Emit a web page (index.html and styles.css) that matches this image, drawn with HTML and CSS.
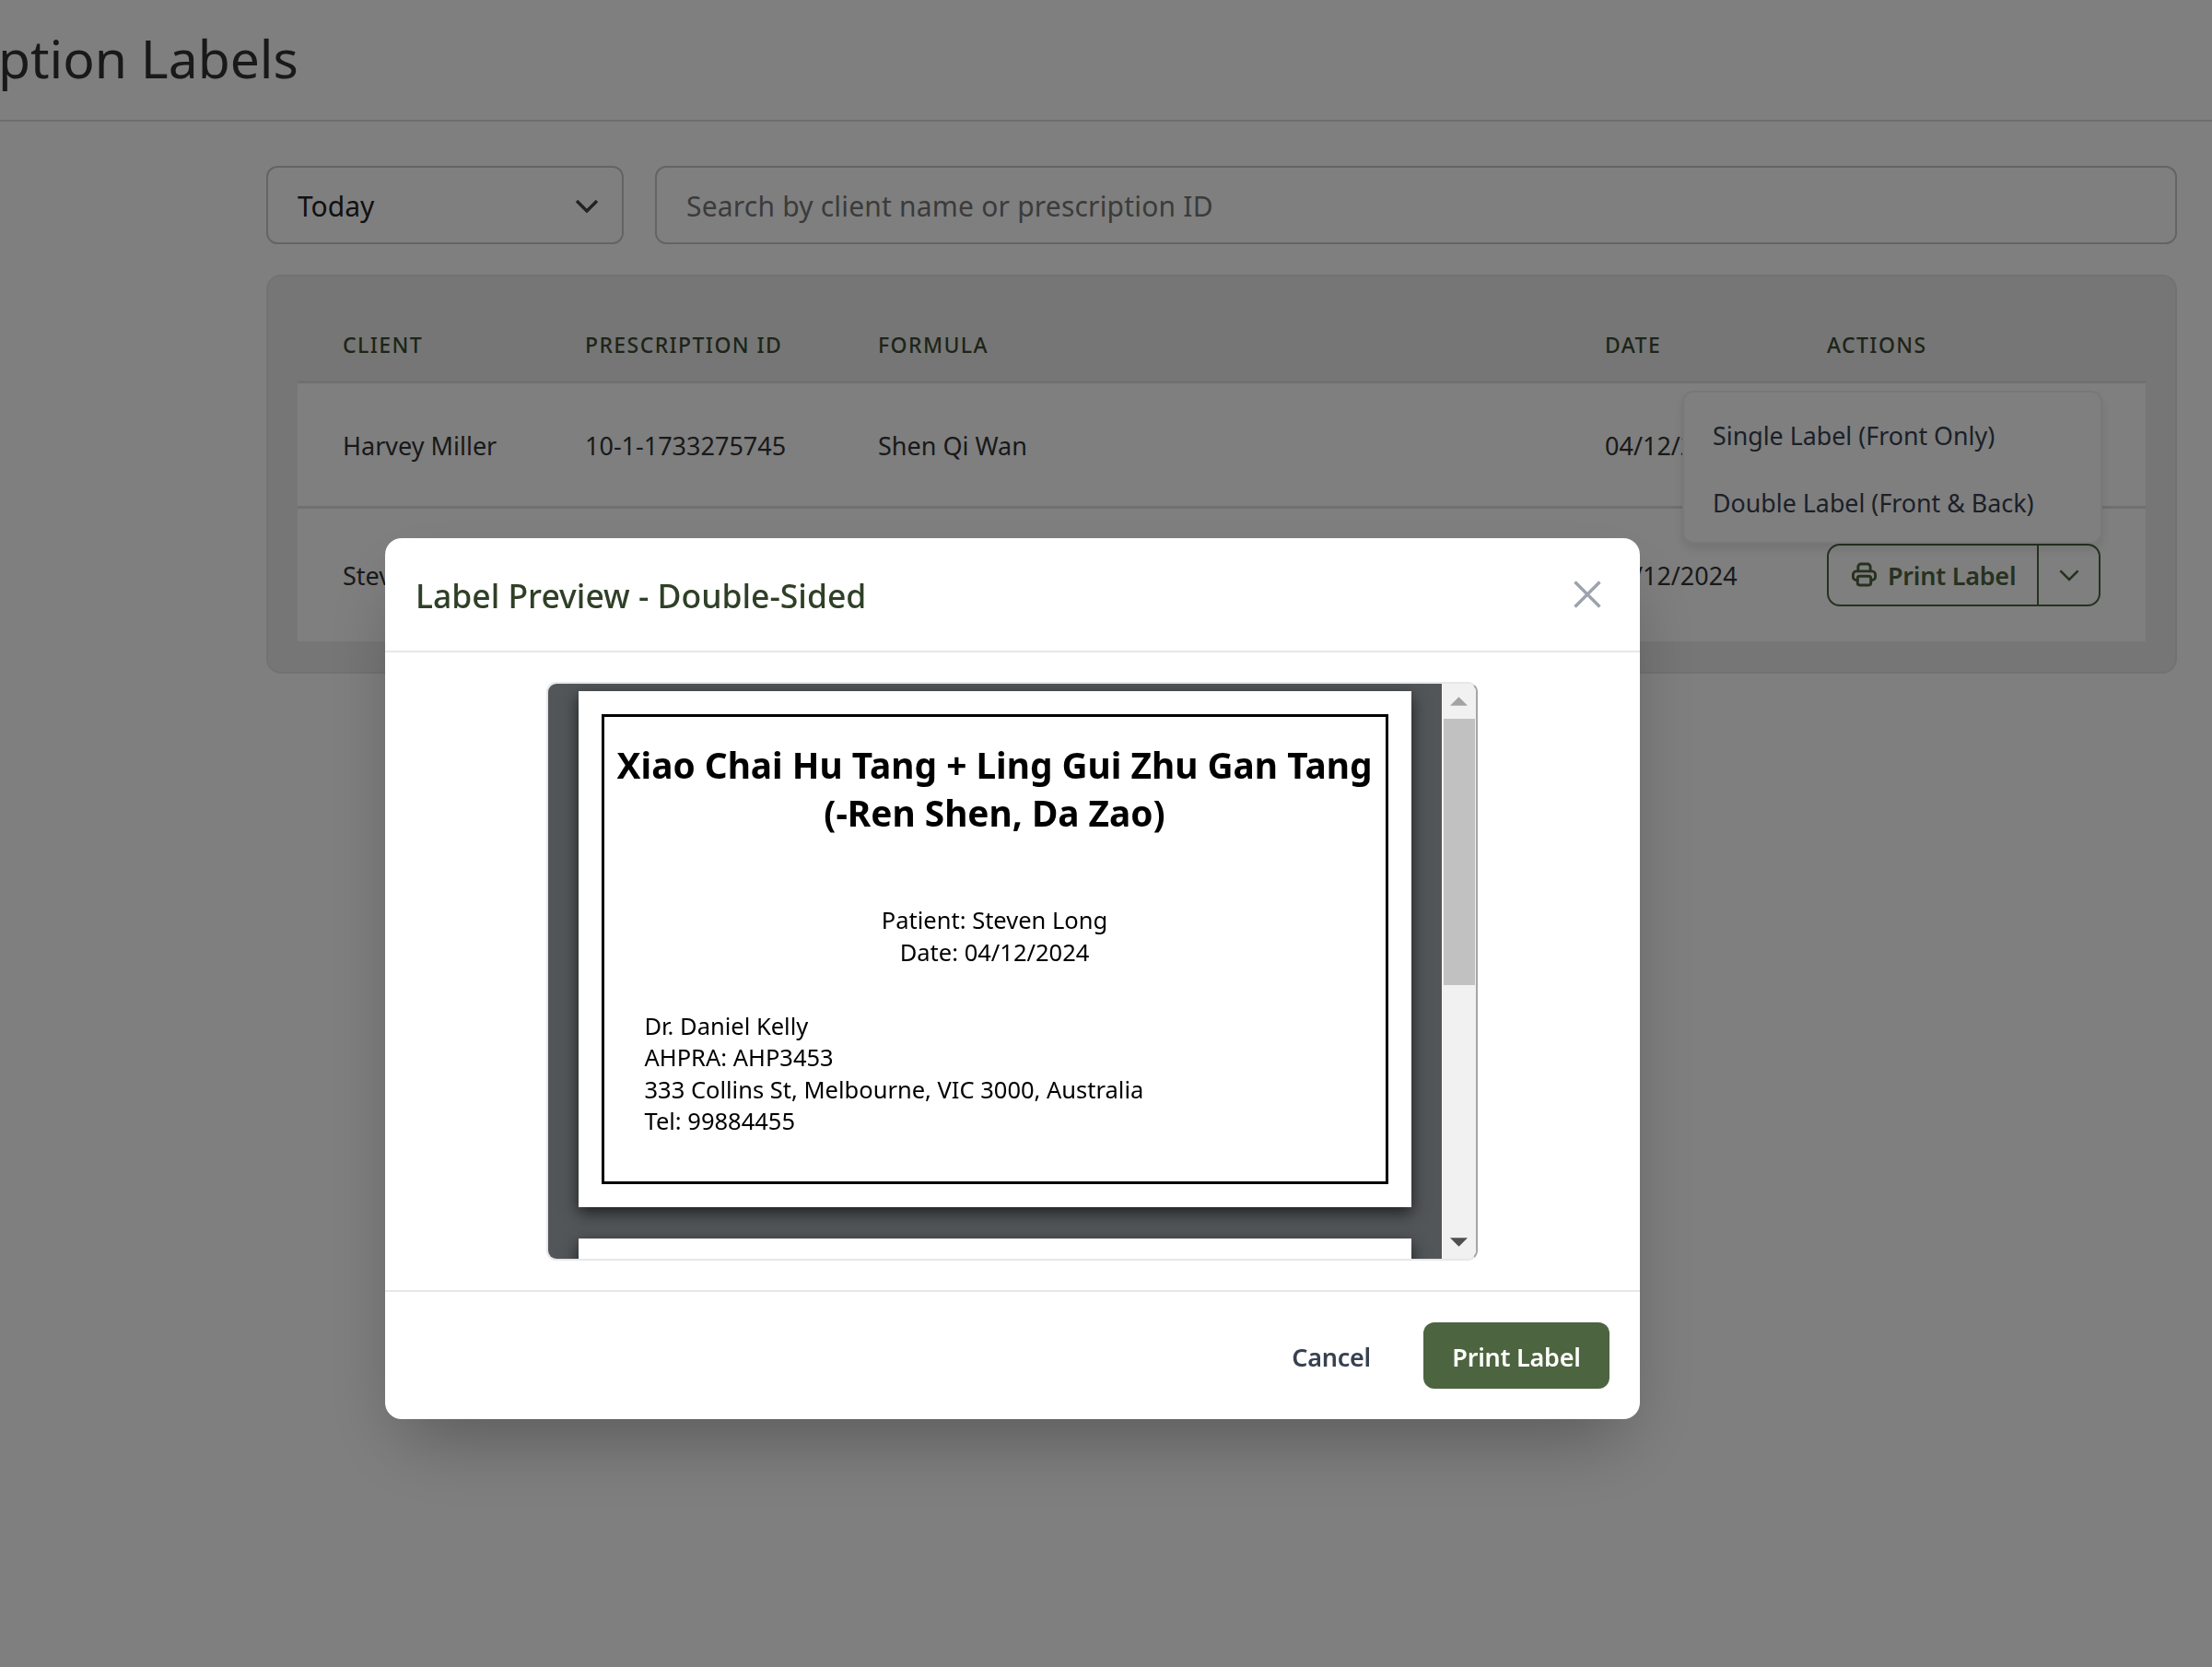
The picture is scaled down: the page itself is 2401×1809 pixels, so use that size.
FILE: index.html
```html
<!DOCTYPE html>
<html lang="en">
<head>
<meta charset="utf-8">
<title>Prescription Labels</title>
<link rel="stylesheet" href="styles.css">
</head>
<body>
<div class="app">
  <header class="topbar"><h1 class="page-title">Prescription Labels</h1></header>
  <main class="content">
    <div class="filters">
      <div class="select"><span>Today</span>
        <svg class="chev" viewBox="0 0 26 15"><path d="M2 2l11 11L24 2"/></svg>
      </div>
      <div class="search">Search by client name or prescription ID</div>
    </div>
    <section class="card">
      <table class="table">
        <colgroup><col class="c1"><col class="c2"><col class="c3"><col class="c4"><col class="c5"></colgroup>
        <thead><tr><th>Client</th><th>Prescription ID</th><th>Formula</th><th>Date</th><th>Actions</th></tr></thead>
        <tbody>
          <tr class="row-a"><td>Harvey Miller</td><td>10-1-1733275745</td><td>Shen Qi Wan</td><td>04/12/2024</td><td class="act">
            <div class="menu-anchor">
              <div class="menu"><div class="menu-item">Single Label (Front Only)</div><div class="menu-item">Double Label (Front &amp; Back)</div></div>
            </div>
          </td></tr>
          <tr class="row-b"><td>Steven Long</td><td>10-1-1733275746</td><td>Xiao Chai Hu Tang</td><td>04/12/2024</td><td class="act">
            <div class="btn-group">
              <div class="btn-main">
                <svg class="printer" viewBox="0 0 24 24"><path d="M6.5 9V5A2.5 2.5 0 0 1 9 2.5h6A2.5 2.5 0 0 1 17.5 5v4"/><path d="M6 17H5a3 3 0 0 1-3-3v-2a3 3 0 0 1 3-3h14a3 3 0 0 1 3 3v2a3 3 0 0 1-3 3h-1"/><rect x="6" y="13.5" width="12" height="8" rx="2"/></svg>
                <span>Print Label</span>
              </div>
              <div class="btn-caret"><svg class="chev-sm" viewBox="0 0 20 12"><path d="M2 2l8 8 8-8"/></svg></div>
            </div>
          </td></tr>
        </tbody>
      </table>
    </section>
  </main>
</div>
<div class="overlay"></div>
<div class="modal">
  <div class="modal-head">
    <h2 class="modal-title">Label Preview - Double-Sided</h2>
    <svg class="close" viewBox="0 0 32 32"><path d="M2.5 2.5l27 27M29.5 2.5l-27 27"/></svg>
  </div>
  <div class="modal-body">
    <div class="frame">
      <div class="viewer">
        <div class="sheet">
          <div class="label">
            <div class="formula">Xiao Chai Hu Tang + Ling Gui Zhu Gan Tang<br>(-Ren Shen, Da Zao)</div>
            <div class="patient">Patient: Steven Long<br>Date: 04/12/2024</div>
            <div class="doctor">Dr. Daniel Kelly<br>AHPRA: AHP3453<br>333 Collins St, Melbourne, VIC 3000, Australia<br>Tel: 99884455</div>
          </div>
        </div>
        <div class="sheet sheet-next"></div>
      </div>
      <div class="scrollbar">
        <div class="sb-btn sb-top"><svg class="sb-arrow up" viewBox="0 0 20 10"><path d="M10 0l10 10H0z"/></svg></div>
        <div class="sb-thumb"></div>
        <div class="sb-rest"></div>
        <div class="sb-btn"><svg class="sb-arrow down" viewBox="0 0 20 10"><path d="M0 0h20L10 10z"/></svg></div>
      </div>
    </div>
  </div>
  <div class="modal-foot">
    <div class="btn-cancel">Cancel</div>
    <div class="btn-print">Print Label</div>
  </div>
</div>
</body>
</html>
```
FILE: styles.css
```css
* { box-sizing: border-box; }
html, body { margin: 0; padding: 0; height: 100%; overflow: hidden; }
body { background: #fff; font-family: "Noto Sans", "Open Sans", sans-serif; color: #333; }
.app { width: 2401px; height: 1809px; }
.topbar { height: 132px; border-bottom: 2px solid #ddd; display: flex; align-items: center; width: 100%; }
.page-title { margin: 0 0 0 -184px; font-size: 57px; font-weight: 400; white-space: nowrap; color: #333; line-height: 1; padding-bottom: 3px; }
.content { padding: 48px 38px 0 289px; }
.filters { display: flex; gap: 34px; }
.select, .search { height: 85px; border: 2px solid #c8c8c8; border-radius: 12px; background: #fff; display: flex; align-items: center; font-size: 30px; padding-top: 2px; }
.select { width: 388px; padding-left: 32px; padding-right: 25px; justify-content: space-between; color: #222; }
.chev { width: 26px; height: 15px; fill: none; stroke: #444; stroke-width: 3.4; }
.search { flex: 1; padding-left: 32px; padding-right: 32px; color: #777; letter-spacing: .2px; }
.card { margin-top: 33px; height: 433px; background: #ededed; border: 2px solid #e4e4e4; border-radius: 16px; padding: 0 32px; }
.table { width: 2006px; border-collapse: collapse; table-layout: fixed; }
.c1 { width: 263px; } .c2 { width: 318px; } .c3 { width: 789px; } .c4 { width: 241px; } .c5 { width: 395px; }
th { height: 114px; text-align: left; padding: 36px 0 0 49px; font-size: 23px; font-weight: 500; letter-spacing: 1.4px; text-transform: uppercase; color: #3a4a30; border-bottom: 3px solid #e0e0e0; }
td { padding: 2px 0 0 49px; font-size: 27px; color: #333; background: #fff; border-bottom: 3px solid #e0e0e0; white-space: nowrap; }
.row-a { height: 136px; }
.row-b { height: 146px; }
.row-b td { border-bottom: 0; }
.act { position: relative; }
.menu-anchor { position: absolute; left: -108px; top: 8px; z-index: 5; }
.menu { width: 456px; height: 166px; background: #fff; border: 2px solid #f0f0f0; border-radius: 12px; box-shadow: 0 6px 12px rgba(0,0,0,.1); padding: 10px 0; }
.menu-item { height: 73px; padding: 0 31px; display: flex; align-items: center; font-size: 26.8px; color: #374151; white-space: nowrap; }
.btn-group { display: flex; width: 297px; height: 68px; border: 2.5px solid #4d6440; border-radius: 14px; color: #4d6440; margin-top: -2px; }
.btn-main { width: 228px; display: flex; align-items: center; padding: 2px 0 0 24px; gap: 11px; border-right: 2px solid #4d6440; font-size: 27px; font-weight: 600; letter-spacing: -.25px; }
.printer { width: 29px; height: 29px; fill: none; stroke: #4d6440; stroke-width: 2.4; stroke-linecap: round; stroke-linejoin: round; margin-top: -2px; }
.btn-caret { flex: 1; display: flex; align-items: center; justify-content: center; }
.chev-sm { width: 24px; height: 14.4px; fill: none; stroke: #4d6440; stroke-width: 2.2; }
.overlay { position: fixed; inset: 0; background: rgba(0,0,0,.5); z-index: 10; }
.modal { position: fixed; z-index: 11; left: 418px; top: 584px; width: 1362px; height: 956px; background: #fff; border-radius: 18px; box-shadow: 0 37px 75px -18px rgba(0,0,0,.3); display: flex; flex-direction: column; }
.modal-head { height: 124px; border-bottom: 2px solid #e5e7eb; display: flex; align-items: center; justify-content: space-between; padding: 2px 41px 0 33px; flex: none; }
.modal-title { margin: 0; font-size: 35.5px; font-weight: 500; color: #2f4027; }
.close { width: 32px; height: 32px; fill: none; stroke: #9ca3af; stroke-width: 3.4; margin-top: -2px; }
.modal-body { flex: 1; display: flex; justify-content: center; padding-top: 32px; padding-right: 2px; }
.frame { width: 1011px; height: 628px; border: 2px solid #e5e7eb; border-right-color: #a4a6a8; border-radius: 11px; overflow: hidden; display: flex; }
.viewer { width: 970px; background: #525659; padding: 8px 33px 0; overflow: hidden; flex: none; }
.sheet { width: 904px; height: 560px; background: #fff; padding: 25px; box-shadow: 0 6px 16px rgba(0,0,0,.65); }
.sheet-next { margin-top: 34px; }
.label { height: 510px; border: 3px solid #000; color: #000; display: flex; flex-direction: column; }
.formula { font-size: 38.8px; font-weight: 700; line-height: 52px; text-align: center; padding-top: 26px; }
.patient { font-size: 25.5px; line-height: 35px; text-align: center; margin-top: 72.5px; }
.doctor { font-size: 25.5px; line-height: 34.6px; margin-top: 45px; padding-left: 44px; }
.scrollbar { flex: 1; background: #f1f1f1; display: flex; flex-direction: column; border-left: 1px solid #fff; }
.sb-btn { height: 36px; display: flex; align-items: center; justify-content: center; flex: none; }
.sb-top { height: 38px; }
.sb-arrow { width: 19px; height: 10px; }
.up { fill: #a3a3a3; }
.down { fill: #505050; }
.sb-thumb { height: 289px; background: #c1c1c1; margin: 0 1px; flex: none; }
.sb-rest { flex: 1; }
.modal-foot { height: 140px; border-top: 2px solid #e5e7eb; display: flex; align-items: center; justify-content: flex-end; padding: 0 33px; gap: 57px; flex: none; }
.btn-cancel { font-size: 27px; font-weight: 600; color: #374151; letter-spacing: -.25px; padding-top: 2px; }
.btn-print { width: 202px; height: 72px; border-radius: 12px; background: #4d6440; color: #fff; font-size: 27px; font-weight: 600; letter-spacing: -.25px; display: flex; align-items: center; justify-content: center; padding-top: 2px; }
```
